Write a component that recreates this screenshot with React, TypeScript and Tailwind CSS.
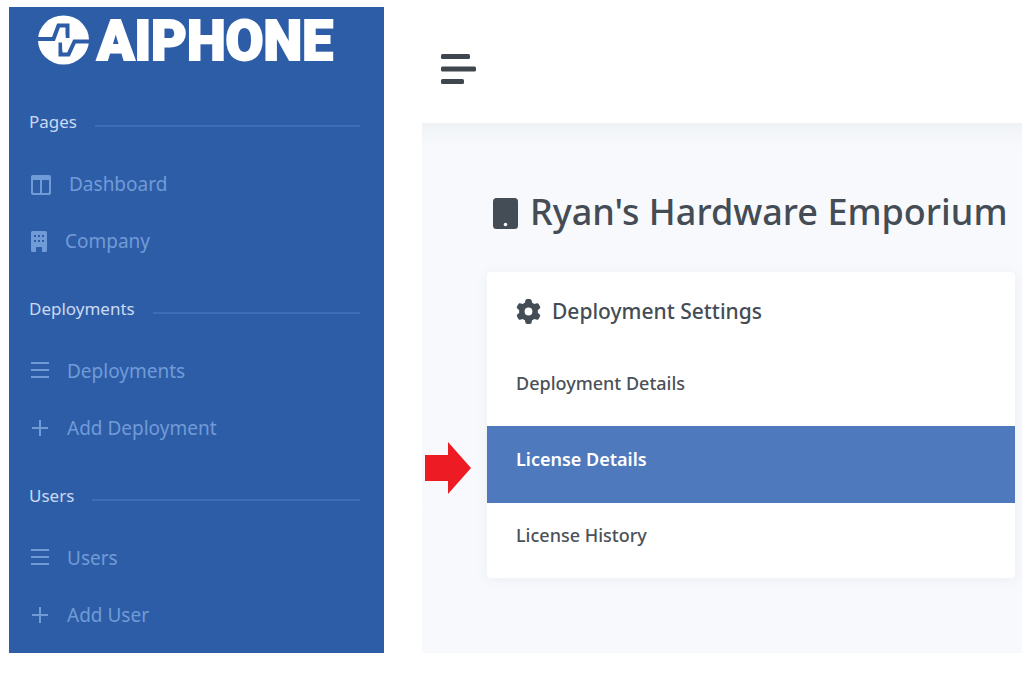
import type { ReactNode } from "react";

function LogoMark() {
  return (
    <svg viewBox="0 0 52 50" className="h-[50px] w-[52px] shrink-0" aria-hidden="true">
      <ellipse cx="26.500" cy="25" rx="25.5" ry="24.5" fill="#fff" />
      <path
        d="M0 24H16.500L21.500 10.500H30.500V23.500M54 26.500H37.500L31.500 39.500H23.500V27"
        fill="none"
        stroke="#2e5da8"
        strokeWidth="4"
      />
      <path d="M27.500 15L20.500 27.500H25L25.500 36L33.500 23H28.500Z" fill="#fff" />
    </svg>
  );
}

function ColumnsIcon() {
  return (
    <svg viewBox="0 0 20 20" className="h-5 w-5" fill="currentColor" aria-hidden="true">
      <path
        fillRule="evenodd"
        d="M2 0H18A2 2 0 0 1 20 2V18A2 2 0 0 1 18 20H2A2 2 0 0 1 0 18V2A2 2 0 0 1 2 0ZM2 5V17A1 1 0 0 0 3 18H9V5ZM11 5V18H17A1 1 0 0 0 18 17V5Z"
      />
    </svg>
  );
}

function BuildingIcon() {
  return (
    <svg viewBox="0 0 16 21" className="h-[21px] w-4" fill="currentColor" aria-hidden="true">
      <path
        fillRule="evenodd"
        d="M1.500 0H14.500A1.500 1.500 0 0 1 16 1.500V19.500A1.500 1.500 0 0 1 14.500 21H11V17A1 1 0 0 0 10 16H6A1 1 0 0 0 5 17V21H1.500A1.500 1.500 0 0 1 0 19.500V1.500A1.500 1.500 0 0 1 1.500 0ZM3 4V6H5V4ZM7 4V6H9V4ZM11 4V6H13V4ZM3 9V11H5V9ZM7 9V11H9V9ZM11 9V11H13V9Z"
      />
    </svg>
  );
}

function ListIcon() {
  return (
    <svg viewBox="0 0 18 18" className="mb-1 h-[18px] w-[18px]" stroke="currentColor" strokeWidth="2" aria-hidden="true">
      <path d="M0 2H18M0 9H18M0 16H18" />
    </svg>
  );
}

function PlusIcon() {
  return (
    <svg viewBox="0 0 18 18" className="mb-0.5 h-[18px] w-[18px]" stroke="currentColor" strokeWidth="2" aria-hidden="true">
      <path d="M1 9H17M9 1V17" />
    </svg>
  );
}

function TabletIcon() {
  return (
    <svg viewBox="0 0 25 31" className="h-[31px] w-[25px] shrink-0" aria-hidden="true">
      <rect width="25" height="31" rx="3.500" fill="#444c55" />
      <circle cx="12.500" cy="26.500" r="1.800" fill="#f7f9fc" />
    </svg>
  );
}

function GearIcon() {
  return (
    <svg viewBox="0 0 512 512" className="h-[25px] w-[25px] shrink-0" fill="#444c55" aria-hidden="true">
      <path d="M495.900 166.600c3.200 8.700.5 18.400-6.400 24.600l-43.300 39.400c1.100 8.300 1.700 16.800 1.700 25.400s-.6 17.100-1.700 25.400l43.300 39.400c6.900 6.200 9.600 15.900 6.400 24.600c-4.400 11.900-9.700 23.300-15.800 34.300l-4.700 8.100c-6.600 11-14 21.400-22.100 31.200c-5.900 7.200-15.700 9.600-24.500 6.800l-55.700-17.700c-13.400 10.300-28.200 18.900-44 25.400l-12.500 57.100c-2 9.100-9 16.300-18.200 17.800c-13.800 2.300-28 3.500-42.500 3.500s-28.700-1.200-42.500-3.500c-9.200-1.500-16.200-8.700-18.200-17.800l-12.500-57.100c-15.800-6.500-30.600-15.100-44-25.400L83.100 425.900c-8.800 2.800-18.600.3-24.500-6.800c-8.100-9.800-15.500-20.200-22.100-31.200l-4.700-8.100c-6.100-11-11.400-22.400-15.800-34.300c-3.200-8.700-.5-18.400 6.400-24.600l43.300-39.400C64.600 273.100 64 264.600 64 256s.6-17.100 1.700-25.400L22.400 191.200c-6.900-6.200-9.600-15.900-6.400-24.600c4.400-11.900 9.700-23.300 15.800-34.300l4.700-8.100c6.600-11 14-21.400 22.100-31.200c5.900-7.200 15.700-9.600 24.500-6.800l55.700 17.700c13.400-10.300 28.200-18.900 44-25.400l12.500-57.100c2-9.100 9-16.300 18.200-17.800C227.300 1.200 241.500 0 256 0s28.700 1.200 42.500 3.500c9.200 1.500 16.200 8.700 18.200 17.800l12.500 57.100c15.800 6.500 30.600 15.100 44 25.400l55.700-17.700c8.800-2.800 18.600-.3 24.500 6.800c8.100 9.800 15.500 20.200 22.100 31.200l4.700 8.100c6.100 11 11.400 22.400 15.800 34.300zM256 336a80 80 0 1 0 0-160 80 80 0 1 0 0 160z" />
    </svg>
  );
}

function NavGroup({ title, children }: { title: string; children: ReactNode }) {
  return (
    <section>
      <div className="flex h-[73px] items-center gap-[18px] pt-1">
        <h2 className="text-[17px] leading-6 text-[#c9daf1]">{title}</h2>
        <div className="mt-2 h-0.5 flex-1 bg-[#3d6cb8]" />
      </div>
      <ul>{children}</ul>
    </section>
  );
}

function NavLink({ icon, label }: { icon: ReactNode; label: string }) {
  return (
    <li>
      <a href="#" className="flex h-[57px] items-center gap-[18px] pl-0.5 text-[19px] text-[#709bd7]">
        {icon}
        <span>{label}</span>
      </a>
    </li>
  );
}

export default function App() {
  return (
    <div className="flex gap-[38px] bg-white pt-[7px] pr-[11px] pb-[21px] pl-[9px] font-['Noto_Sans','Open_Sans',sans-serif]">
      <aside className="w-[375px] shrink-0 bg-[#2e5da8] pr-6 pb-[9px] pl-5">
        <div className="flex h-[76px] items-start gap-2 pt-2 pl-2">
          <LogoMark />
          <span className="font-['Roboto',sans-serif] text-[55px] leading-[52px] font-black text-white [-webkit-text-stroke:2px_white]">
            AIPHONE
          </span>
        </div>
        <nav>
          <NavGroup title="Pages">
            <NavLink icon={<ColumnsIcon />} label="Dashboard" />
            <NavLink icon={<BuildingIcon />} label="Company" />
          </NavGroup>
          <NavGroup title="Deployments">
            <NavLink icon={<ListIcon />} label="Deployments" />
            <NavLink icon={<PlusIcon />} label="Add Deployment" />
          </NavGroup>
          <NavGroup title="Users">
            <NavLink icon={<ListIcon />} label="Users" />
            <NavLink icon={<PlusIcon />} label="Add User" />
          </NavGroup>
        </nav>
      </aside>

      <div className="flex min-w-0 flex-1 flex-col">
        <header className="flex h-[116px] items-center pt-2 pl-[19px]">
          <button type="button" aria-label="Toggle menu">
            <svg viewBox="0 0 35 30" className="h-[30px] w-[35px]" fill="#40464d" aria-hidden="true">
              <rect width="29" height="5" rx="1.500" />
              <rect y="12.500" width="35" height="5" rx="1.500" />
              <rect y="25" width="23" height="5" rx="1.500" />
            </svg>
          </button>
        </header>

        <main className="flex-1 bg-[#f7f9fc] bg-linear-to-b from-[#f0f3f5] to-[#f7f9fc] to-[24px] pr-[7px] pl-[65px]">
          <div className="flex h-[149px] items-center gap-3 pt-8 pl-1.5">
            <TabletIcon />
            <h1 className="pb-1 text-[36px] leading-[52px] font-medium whitespace-nowrap text-[#444c55]">
              Ryan's Hardware Emporium
            </h1>
          </div>

          <section className="rounded bg-white shadow-[0_2px_14px_rgba(60,80,100,0.06)]">
            <div className="flex h-[78px] items-center gap-[11px] pl-[29px]">
              <GearIcon />
              <h2 className="pt-0.5 text-[21px] font-medium text-[#444c55]">Deployment Settings</h2>
            </div>
            <nav className="text-[18px] font-medium text-[#4b5158]">
              <a href="#" className="flex h-[76px] items-center pb-2.5 pl-[29px]">
                Deployment Details
              </a>
              <div className="relative">
                <a href="#" aria-current="page" className="flex h-[77px] items-center bg-[#4e79bd] pb-2.5 pl-[29px] font-semibold text-white">
                  License Details
                </a>
                <svg viewBox="0 0 46 52" className="absolute top-4 right-full mr-4 h-[52px] w-[46px]" fill="#ed1c24" aria-hidden="true">
                  <path d="M0 13H23V0L46 26L23 52V39H0Z" />
                </svg>
              </div>
              <a href="#" className="flex h-[75px] items-center pb-2.5 pl-[29px]">
                License History
              </a>
            </nav>
          </section>
        </main>
      </div>
    </div>
  );
}
